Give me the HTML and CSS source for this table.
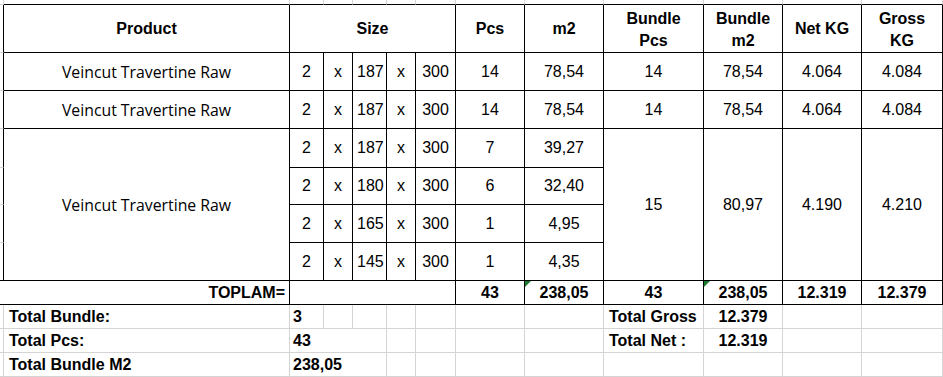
FILE: index.html
```html
<!DOCTYPE html>
<html>
<head>
<meta charset="utf-8">
<link rel="stylesheet" href="styles.css">
</head>
<body>
<table class="sheet">
  <colgroup>
    <col class="w-c0"><col class="w-a"><col class="w-b"><col class="w-c"><col class="w-d"><col class="w-e"><col class="w-f"><col class="w-g"><col class="w-h"><col class="w-i"><col class="w-j"><col class="w-k"><col class="w-l">
  </colgroup>
  <tr class="r-top">
    <td></td><td class="kb"></td><td class="kb"></td><td class="kb"></td><td class="kb"></td><td class="kb"></td><td class="kb"></td><td class="kb"></td><td class="kb"></td><td class="kb"></td><td class="kb"></td><td class="kb"></td><td class="kb"></td>
  </tr>
  <tr class="r-head">
    <td class="kr"></td>
    <td class="k hd">Product</td>
    <td class="k hd" colspan="5">Size</td>
    <td class="k hd">Pcs</td>
    <td class="k hd">m2</td>
    <td class="k hd two">Bundle<br>Pcs</td>
    <td class="k hd two">Bundle<br>m2</td>
    <td class="k hd">Net KG</td>
    <td class="k hd two">Gross<br>KG</td>
  </tr>
  <tr class="r-38">
    <td class="kr"></td>
    <td class="k prod">Veincut Travertine Raw</td>
    <td class="k c">2</td><td class="k c">x</td><td class="k c">187</td><td class="k c">x</td><td class="k c">300</td>
    <td class="k c">14</td><td class="k c">78,54</td><td class="k c">14</td><td class="k c">78,54</td><td class="k c">4.064</td><td class="k c">4.084</td>
  </tr>
  <tr class="r-38">
    <td class="kr"></td>
    <td class="k prod">Veincut Travertine Raw</td>
    <td class="k c">2</td><td class="k c">x</td><td class="k c">187</td><td class="k c">x</td><td class="k c">300</td>
    <td class="k c">14</td><td class="k c">78,54</td><td class="k c">14</td><td class="k c">78,54</td><td class="k c">4.064</td><td class="k c">4.084</td>
  </tr>
  <tr class="r-39">
    <td class="kr"></td>
    <td class="k prod" rowspan="4">Veincut Travertine Raw</td>
    <td class="k c">2</td><td class="k c">x</td><td class="k c">187</td><td class="k c">x</td><td class="k c">300</td>
    <td class="k c">7</td><td class="k c">39,27</td>
    <td class="k c" rowspan="4">15</td><td class="k c" rowspan="4">80,97</td><td class="k c" rowspan="4">4.190</td><td class="k c" rowspan="4">4.210</td>
  </tr>
  <tr class="r-37">
    <td class="kr"></td>
    <td class="k c">2</td><td class="k c">x</td><td class="k c">180</td><td class="k c">x</td><td class="k c">300</td>
    <td class="k c">6</td><td class="k c">32,40</td>
  </tr>
  <tr class="r-38">
    <td class="kr"></td>
    <td class="k c">2</td><td class="k c">x</td><td class="k c">165</td><td class="k c">x</td><td class="k c">300</td>
    <td class="k c">1</td><td class="k c">4,95</td>
  </tr>
  <tr class="r-38">
    <td class="k"></td>
    <td class="k c">2</td><td class="k c">x</td><td class="k c">145</td><td class="k c">x</td><td class="k c">300</td>
    <td class="k c">1</td><td class="k c">4,35</td>
  </tr>
  <tr class="r-24">
    <td class="k bold right" colspan="2">TOPLAM=</td>
    <td class="k" colspan="5"></td>
    <td class="k c bold">43</td>
    <td class="k c bold flagged"><span class="flag"></span>238,05</td>
    <td class="k c bold">43</td>
    <td class="k c bold flagged"><span class="flag"></span>238,05</td>
    <td class="k c bold">12.319</td>
    <td class="k c bold">12.379</td>
  </tr>
  <tr class="r-24">
    <td></td>
    <td class="bold lbl">Total Bundle:</td>
    <td class="bold val">3</td><td></td><td></td><td></td><td></td>
    <td></td><td></td>
    <td class="bold lbl">Total Gross</td>
    <td class="bold c">12.379</td>
    <td></td><td></td>
  </tr>
  <tr class="r-24">
    <td></td>
    <td class="bold lbl">Total Pcs:</td>
    <td class="bold val" colspan="3">43</td><td></td><td></td>
    <td></td><td></td>
    <td class="bold lbl">Total Net :</td>
    <td class="bold c">12.319</td>
    <td></td><td></td>
  </tr>
  <tr class="r-24">
    <td></td>
    <td class="bold lbl">Total Bundle M2</td>
    <td class="bold val" colspan="3">238,05</td><td></td><td></td>
    <td></td><td></td><td></td><td></td>
    <td></td><td></td>
  </tr>
</table>
</body>
</html>
```
FILE: styles.css
```css
html, body {
  margin: 0;
  padding: 0;
  background: #ffffff;
  overflow: hidden;
}

.sheet {
  table-layout: fixed;
  border-collapse: separate;
  border-spacing: 0;
  width: 943px;
  font-family: "Liberation Sans", Arial, sans-serif;
  font-size: 16px;
  color: #000000;
}

.sheet td {
  box-sizing: border-box;
  padding: 0 4px;
  border-right: 1px solid #d4d4d4;
  border-bottom: 1px solid #d4d4d4;
  line-height: 18px;
  white-space: nowrap;
  vertical-align: middle;
}

.w-c0 { width: 4px; }
.w-a { width: 286px; }
.w-b { width: 34px; }
.w-c { width: 29px; }
.w-d { width: 34px; }
.w-e { width: 29px; }
.w-f { width: 40px; }
.w-g { width: 69px; }
.w-h { width: 79px; }
.w-i { width: 100px; }
.w-j { width: 79px; }
.w-k { width: 79px; }
.w-l { width: 81px; }

.r-top { height: 5px; }
.r-head { height: 48px; }
.r-39 { height: 39px; }
.r-38 { height: 38px; }
.r-37 { height: 37px; }
.r-24 { height: 24px; }

.sheet .r-top td { padding: 0; line-height: 0; font-size: 0; }

.sheet td.k { border-right-color: #000000; border-bottom-color: #000000; }
.sheet td.kr { border-right-color: #000000; }
.sheet td.kb { border-bottom-color: #000000; }

.sheet td.hd {
  font-weight: bold;
  text-align: center;
  line-height: 22px;
}

.sheet td.two {
  padding-top: 3px;
}

.sheet td.prod {
  font-family: "Open Sans", "Liberation Sans", sans-serif;
  font-size: 15.8px;
  text-align: center;
}

.c { text-align: center; }
.right { text-align: right; }
.bold { font-weight: bold; }

.sheet td.lbl { padding-left: 5px; }
.sheet td.val { padding-left: 3px; }

.flagged { position: relative; }

.flag {
  position: absolute;
  left: 0;
  top: 0;
  width: 0;
  height: 0;
  border-top: 6px solid #1e7b2e;
  border-right: 6px solid transparent;
}
```
